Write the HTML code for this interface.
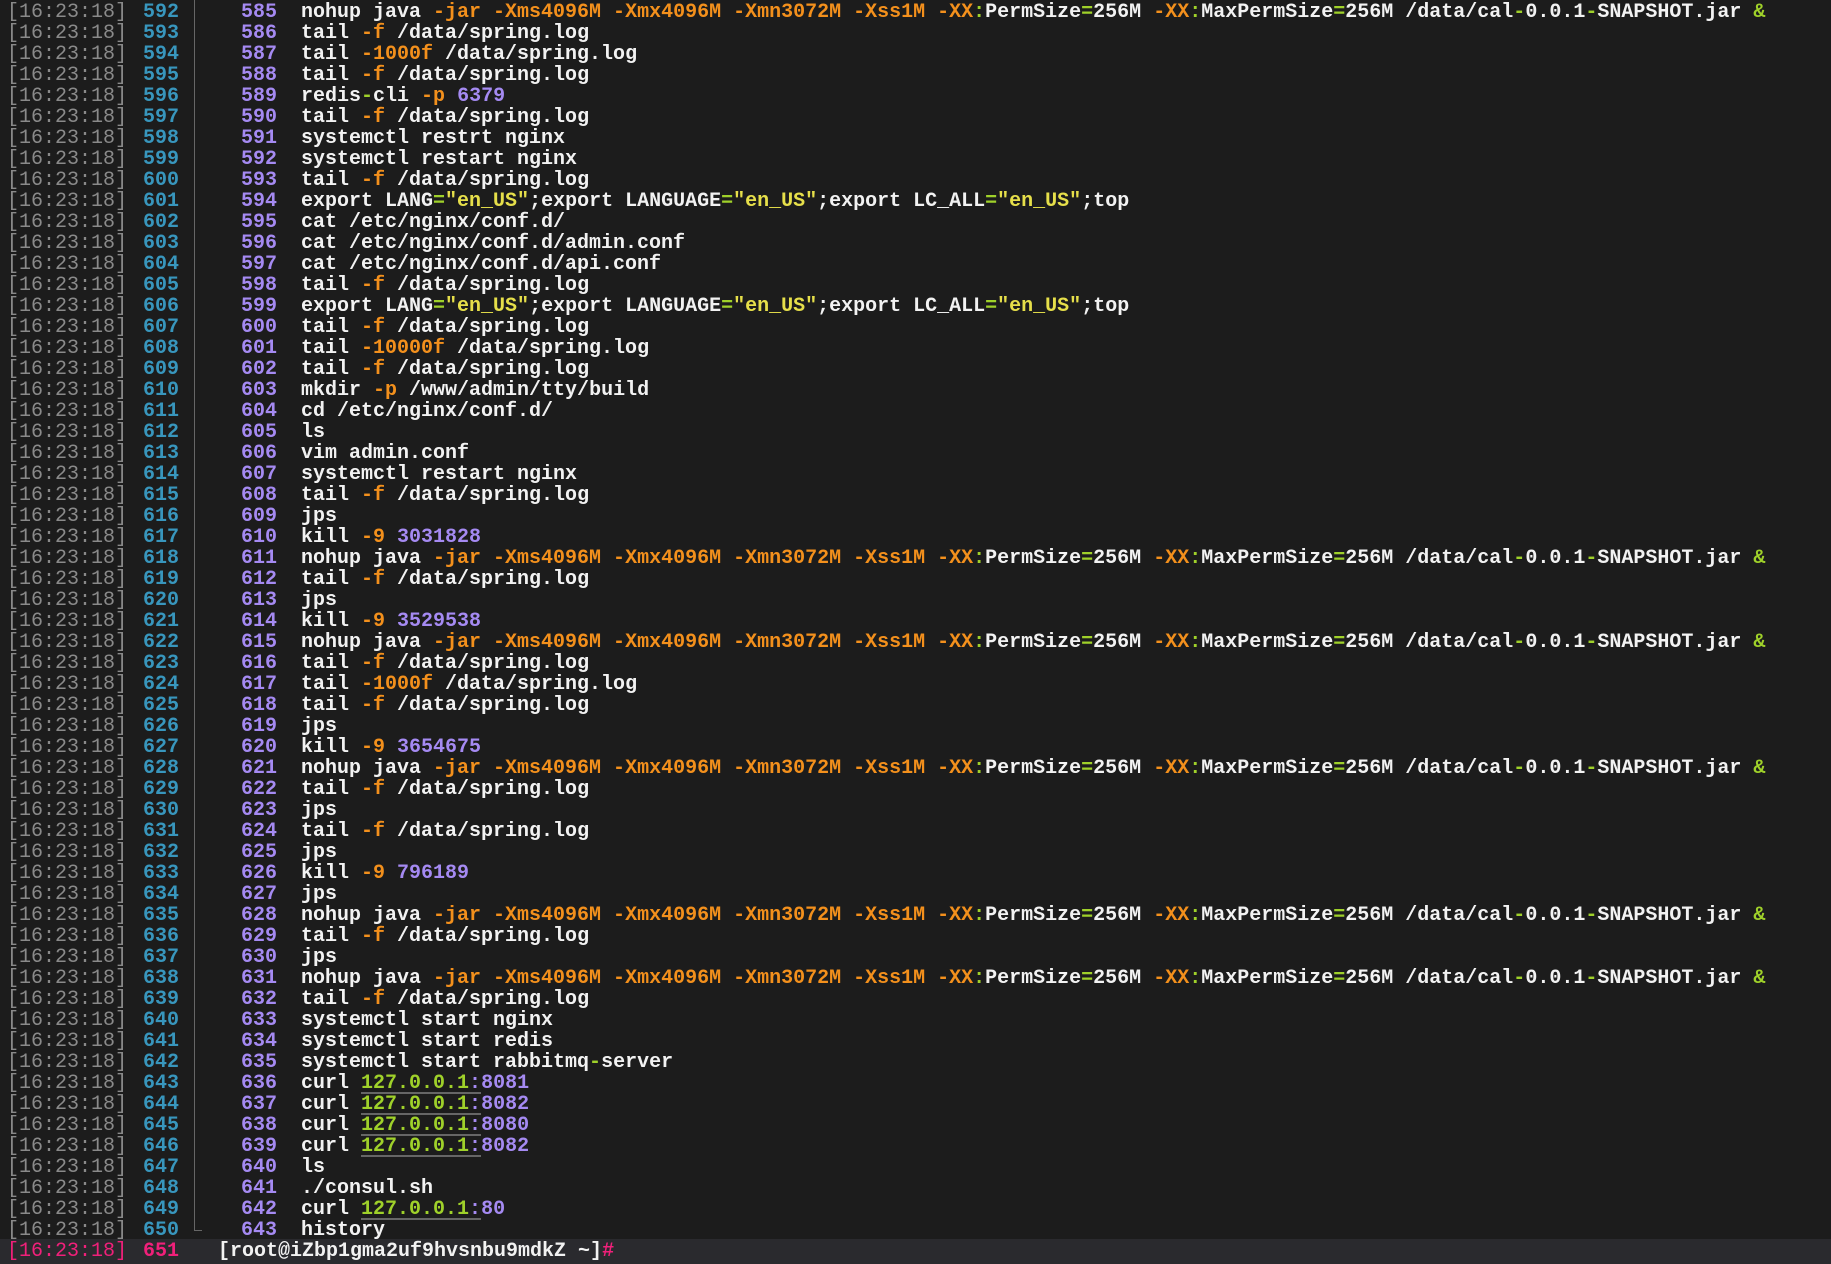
<!DOCTYPE html>
<html><head><meta charset="utf-8"><style>
html,body{margin:0;padding:0;background:#1c1c1c;width:1831px;height:1264px;overflow:hidden}
body{font-family:"Liberation Mono",monospace;font-size:20px;font-weight:bold;color:#f2f2f2;position:relative}
.wrap{position:absolute;left:0;top:2px;width:100%}
.r{position:relative;height:21px;line-height:21px;white-space:pre}
.r span.t{position:absolute;left:7px;color:#8a8a8a;font-weight:normal}
.r span.n{position:absolute;left:143px;color:#3896bd}
.r span.h{position:absolute;left:241px;color:#a58af2}
.r span.c{position:absolute;left:301px}
.o{color:#f3901c}.g{color:#9fd12a}.p{color:#a58af2}.y{color:#e6df4a}
.u{display:inline-block;height:19px;line-height:21px;vertical-align:top;border-bottom:2px solid #666;overflow:visible}
.sep{position:absolute;left:194px;top:0;width:1px;height:1230px;background:#666}
.corner{position:absolute;left:194px;top:1230px;width:8px;height:1px;background:#666}
.prompt{background:#2a2a2e;margin-top:-2px;padding-top:2px;height:23px}
.prompt span.t,.prompt span.n{color:#f0207a}
.prompt span.c{left:218px}
</style></head><body>
<div class="sep"></div><div class="corner"></div>
<div class="wrap">
<div class="r"><span class="t">[16:23:18]</span><span class="n">592</span><span class="h">585</span><span class="c">nohup java <span class="o">-jar -Xms4096M -Xmx4096M -Xmn3072M -Xss1M -XX</span><span class="g">:</span>PermSize<span class="g">=</span>256M <span class="o">-XX</span><span class="g">:</span>MaxPermSize<span class="g">=</span>256M /data/cal<span class="g">-</span>0.0.1<span class="g">-</span>SNAPSHOT.jar <span class="g">&amp;</span></span></div>
<div class="r"><span class="t">[16:23:18]</span><span class="n">593</span><span class="h">586</span><span class="c">tail <span class="o">-f</span> /data/spring.log</span></div>
<div class="r"><span class="t">[16:23:18]</span><span class="n">594</span><span class="h">587</span><span class="c">tail <span class="o">-1000f</span> /data/spring.log</span></div>
<div class="r"><span class="t">[16:23:18]</span><span class="n">595</span><span class="h">588</span><span class="c">tail <span class="o">-f</span> /data/spring.log</span></div>
<div class="r"><span class="t">[16:23:18]</span><span class="n">596</span><span class="h">589</span><span class="c">redis<span class="g">-</span>cli <span class="o">-p</span> <span class="p">6379</span></span></div>
<div class="r"><span class="t">[16:23:18]</span><span class="n">597</span><span class="h">590</span><span class="c">tail <span class="o">-f</span> /data/spring.log</span></div>
<div class="r"><span class="t">[16:23:18]</span><span class="n">598</span><span class="h">591</span><span class="c">systemctl restrt nginx</span></div>
<div class="r"><span class="t">[16:23:18]</span><span class="n">599</span><span class="h">592</span><span class="c">systemctl restart nginx</span></div>
<div class="r"><span class="t">[16:23:18]</span><span class="n">600</span><span class="h">593</span><span class="c">tail <span class="o">-f</span> /data/spring.log</span></div>
<div class="r"><span class="t">[16:23:18]</span><span class="n">601</span><span class="h">594</span><span class="c">export LANG<span class="g">=</span><span class="y">"en_US"</span>;export LANGUAGE<span class="g">=</span><span class="y">"en_US"</span>;export LC_ALL<span class="g">=</span><span class="y">"en_US"</span>;top</span></div>
<div class="r"><span class="t">[16:23:18]</span><span class="n">602</span><span class="h">595</span><span class="c">cat /etc/nginx/conf.d/</span></div>
<div class="r"><span class="t">[16:23:18]</span><span class="n">603</span><span class="h">596</span><span class="c">cat /etc/nginx/conf.d/admin.conf</span></div>
<div class="r"><span class="t">[16:23:18]</span><span class="n">604</span><span class="h">597</span><span class="c">cat /etc/nginx/conf.d/api.conf</span></div>
<div class="r"><span class="t">[16:23:18]</span><span class="n">605</span><span class="h">598</span><span class="c">tail <span class="o">-f</span> /data/spring.log</span></div>
<div class="r"><span class="t">[16:23:18]</span><span class="n">606</span><span class="h">599</span><span class="c">export LANG<span class="g">=</span><span class="y">"en_US"</span>;export LANGUAGE<span class="g">=</span><span class="y">"en_US"</span>;export LC_ALL<span class="g">=</span><span class="y">"en_US"</span>;top</span></div>
<div class="r"><span class="t">[16:23:18]</span><span class="n">607</span><span class="h">600</span><span class="c">tail <span class="o">-f</span> /data/spring.log</span></div>
<div class="r"><span class="t">[16:23:18]</span><span class="n">608</span><span class="h">601</span><span class="c">tail <span class="o">-10000f</span> /data/spring.log</span></div>
<div class="r"><span class="t">[16:23:18]</span><span class="n">609</span><span class="h">602</span><span class="c">tail <span class="o">-f</span> /data/spring.log</span></div>
<div class="r"><span class="t">[16:23:18]</span><span class="n">610</span><span class="h">603</span><span class="c">mkdir <span class="o">-p</span> /www/admin/tty/build</span></div>
<div class="r"><span class="t">[16:23:18]</span><span class="n">611</span><span class="h">604</span><span class="c">cd /etc/nginx/conf.d/</span></div>
<div class="r"><span class="t">[16:23:18]</span><span class="n">612</span><span class="h">605</span><span class="c">ls</span></div>
<div class="r"><span class="t">[16:23:18]</span><span class="n">613</span><span class="h">606</span><span class="c">vim admin.conf</span></div>
<div class="r"><span class="t">[16:23:18]</span><span class="n">614</span><span class="h">607</span><span class="c">systemctl restart nginx</span></div>
<div class="r"><span class="t">[16:23:18]</span><span class="n">615</span><span class="h">608</span><span class="c">tail <span class="o">-f</span> /data/spring.log</span></div>
<div class="r"><span class="t">[16:23:18]</span><span class="n">616</span><span class="h">609</span><span class="c">jps</span></div>
<div class="r"><span class="t">[16:23:18]</span><span class="n">617</span><span class="h">610</span><span class="c">kill <span class="o">-9</span> <span class="p">3031828</span></span></div>
<div class="r"><span class="t">[16:23:18]</span><span class="n">618</span><span class="h">611</span><span class="c">nohup java <span class="o">-jar -Xms4096M -Xmx4096M -Xmn3072M -Xss1M -XX</span><span class="g">:</span>PermSize<span class="g">=</span>256M <span class="o">-XX</span><span class="g">:</span>MaxPermSize<span class="g">=</span>256M /data/cal<span class="g">-</span>0.0.1<span class="g">-</span>SNAPSHOT.jar <span class="g">&amp;</span></span></div>
<div class="r"><span class="t">[16:23:18]</span><span class="n">619</span><span class="h">612</span><span class="c">tail <span class="o">-f</span> /data/spring.log</span></div>
<div class="r"><span class="t">[16:23:18]</span><span class="n">620</span><span class="h">613</span><span class="c">jps</span></div>
<div class="r"><span class="t">[16:23:18]</span><span class="n">621</span><span class="h">614</span><span class="c">kill <span class="o">-9</span> <span class="p">3529538</span></span></div>
<div class="r"><span class="t">[16:23:18]</span><span class="n">622</span><span class="h">615</span><span class="c">nohup java <span class="o">-jar -Xms4096M -Xmx4096M -Xmn3072M -Xss1M -XX</span><span class="g">:</span>PermSize<span class="g">=</span>256M <span class="o">-XX</span><span class="g">:</span>MaxPermSize<span class="g">=</span>256M /data/cal<span class="g">-</span>0.0.1<span class="g">-</span>SNAPSHOT.jar <span class="g">&amp;</span></span></div>
<div class="r"><span class="t">[16:23:18]</span><span class="n">623</span><span class="h">616</span><span class="c">tail <span class="o">-f</span> /data/spring.log</span></div>
<div class="r"><span class="t">[16:23:18]</span><span class="n">624</span><span class="h">617</span><span class="c">tail <span class="o">-1000f</span> /data/spring.log</span></div>
<div class="r"><span class="t">[16:23:18]</span><span class="n">625</span><span class="h">618</span><span class="c">tail <span class="o">-f</span> /data/spring.log</span></div>
<div class="r"><span class="t">[16:23:18]</span><span class="n">626</span><span class="h">619</span><span class="c">jps</span></div>
<div class="r"><span class="t">[16:23:18]</span><span class="n">627</span><span class="h">620</span><span class="c">kill <span class="o">-9</span> <span class="p">3654675</span></span></div>
<div class="r"><span class="t">[16:23:18]</span><span class="n">628</span><span class="h">621</span><span class="c">nohup java <span class="o">-jar -Xms4096M -Xmx4096M -Xmn3072M -Xss1M -XX</span><span class="g">:</span>PermSize<span class="g">=</span>256M <span class="o">-XX</span><span class="g">:</span>MaxPermSize<span class="g">=</span>256M /data/cal<span class="g">-</span>0.0.1<span class="g">-</span>SNAPSHOT.jar <span class="g">&amp;</span></span></div>
<div class="r"><span class="t">[16:23:18]</span><span class="n">629</span><span class="h">622</span><span class="c">tail <span class="o">-f</span> /data/spring.log</span></div>
<div class="r"><span class="t">[16:23:18]</span><span class="n">630</span><span class="h">623</span><span class="c">jps</span></div>
<div class="r"><span class="t">[16:23:18]</span><span class="n">631</span><span class="h">624</span><span class="c">tail <span class="o">-f</span> /data/spring.log</span></div>
<div class="r"><span class="t">[16:23:18]</span><span class="n">632</span><span class="h">625</span><span class="c">jps</span></div>
<div class="r"><span class="t">[16:23:18]</span><span class="n">633</span><span class="h">626</span><span class="c">kill <span class="o">-9</span> <span class="p">796189</span></span></div>
<div class="r"><span class="t">[16:23:18]</span><span class="n">634</span><span class="h">627</span><span class="c">jps</span></div>
<div class="r"><span class="t">[16:23:18]</span><span class="n">635</span><span class="h">628</span><span class="c">nohup java <span class="o">-jar -Xms4096M -Xmx4096M -Xmn3072M -Xss1M -XX</span><span class="g">:</span>PermSize<span class="g">=</span>256M <span class="o">-XX</span><span class="g">:</span>MaxPermSize<span class="g">=</span>256M /data/cal<span class="g">-</span>0.0.1<span class="g">-</span>SNAPSHOT.jar <span class="g">&amp;</span></span></div>
<div class="r"><span class="t">[16:23:18]</span><span class="n">636</span><span class="h">629</span><span class="c">tail <span class="o">-f</span> /data/spring.log</span></div>
<div class="r"><span class="t">[16:23:18]</span><span class="n">637</span><span class="h">630</span><span class="c">jps</span></div>
<div class="r"><span class="t">[16:23:18]</span><span class="n">638</span><span class="h">631</span><span class="c">nohup java <span class="o">-jar -Xms4096M -Xmx4096M -Xmn3072M -Xss1M -XX</span><span class="g">:</span>PermSize<span class="g">=</span>256M <span class="o">-XX</span><span class="g">:</span>MaxPermSize<span class="g">=</span>256M /data/cal<span class="g">-</span>0.0.1<span class="g">-</span>SNAPSHOT.jar <span class="g">&amp;</span></span></div>
<div class="r"><span class="t">[16:23:18]</span><span class="n">639</span><span class="h">632</span><span class="c">tail <span class="o">-f</span> /data/spring.log</span></div>
<div class="r"><span class="t">[16:23:18]</span><span class="n">640</span><span class="h">633</span><span class="c">systemctl start nginx</span></div>
<div class="r"><span class="t">[16:23:18]</span><span class="n">641</span><span class="h">634</span><span class="c">systemctl start redis</span></div>
<div class="r"><span class="t">[16:23:18]</span><span class="n">642</span><span class="h">635</span><span class="c">systemctl start rabbitmq<span class="g">-</span>server</span></div>
<div class="r"><span class="t">[16:23:18]</span><span class="n">643</span><span class="h">636</span><span class="c">curl <span class="u"><span class="g">127.0.0.1</span><span class="p">:</span></span><span class="p">8081</span></span></div>
<div class="r"><span class="t">[16:23:18]</span><span class="n">644</span><span class="h">637</span><span class="c">curl <span class="u"><span class="g">127.0.0.1</span><span class="p">:</span></span><span class="p">8082</span></span></div>
<div class="r"><span class="t">[16:23:18]</span><span class="n">645</span><span class="h">638</span><span class="c">curl <span class="u"><span class="g">127.0.0.1</span><span class="p">:</span></span><span class="p">8080</span></span></div>
<div class="r"><span class="t">[16:23:18]</span><span class="n">646</span><span class="h">639</span><span class="c">curl <span class="u"><span class="g">127.0.0.1</span><span class="p">:</span></span><span class="p">8082</span></span></div>
<div class="r"><span class="t">[16:23:18]</span><span class="n">647</span><span class="h">640</span><span class="c">ls</span></div>
<div class="r"><span class="t">[16:23:18]</span><span class="n">648</span><span class="h">641</span><span class="c">./consul.sh</span></div>
<div class="r"><span class="t">[16:23:18]</span><span class="n">649</span><span class="h">642</span><span class="c">curl <span class="u"><span class="g">127.0.0.1</span><span class="p">:</span></span><span class="p">80</span></span></div>
<div class="r"><span class="t">[16:23:18]</span><span class="n">650</span><span class="h">643</span><span class="c">history</span></div>
<div class="r prompt"><span class="t">[16:23:18]</span><span class="n">651</span><span class="c">[root@iZbp1gma2uf9hvsnbu9mdkZ ~]<span style="color:#f0207a">#</span></span></div>
</div>
</body></html>
